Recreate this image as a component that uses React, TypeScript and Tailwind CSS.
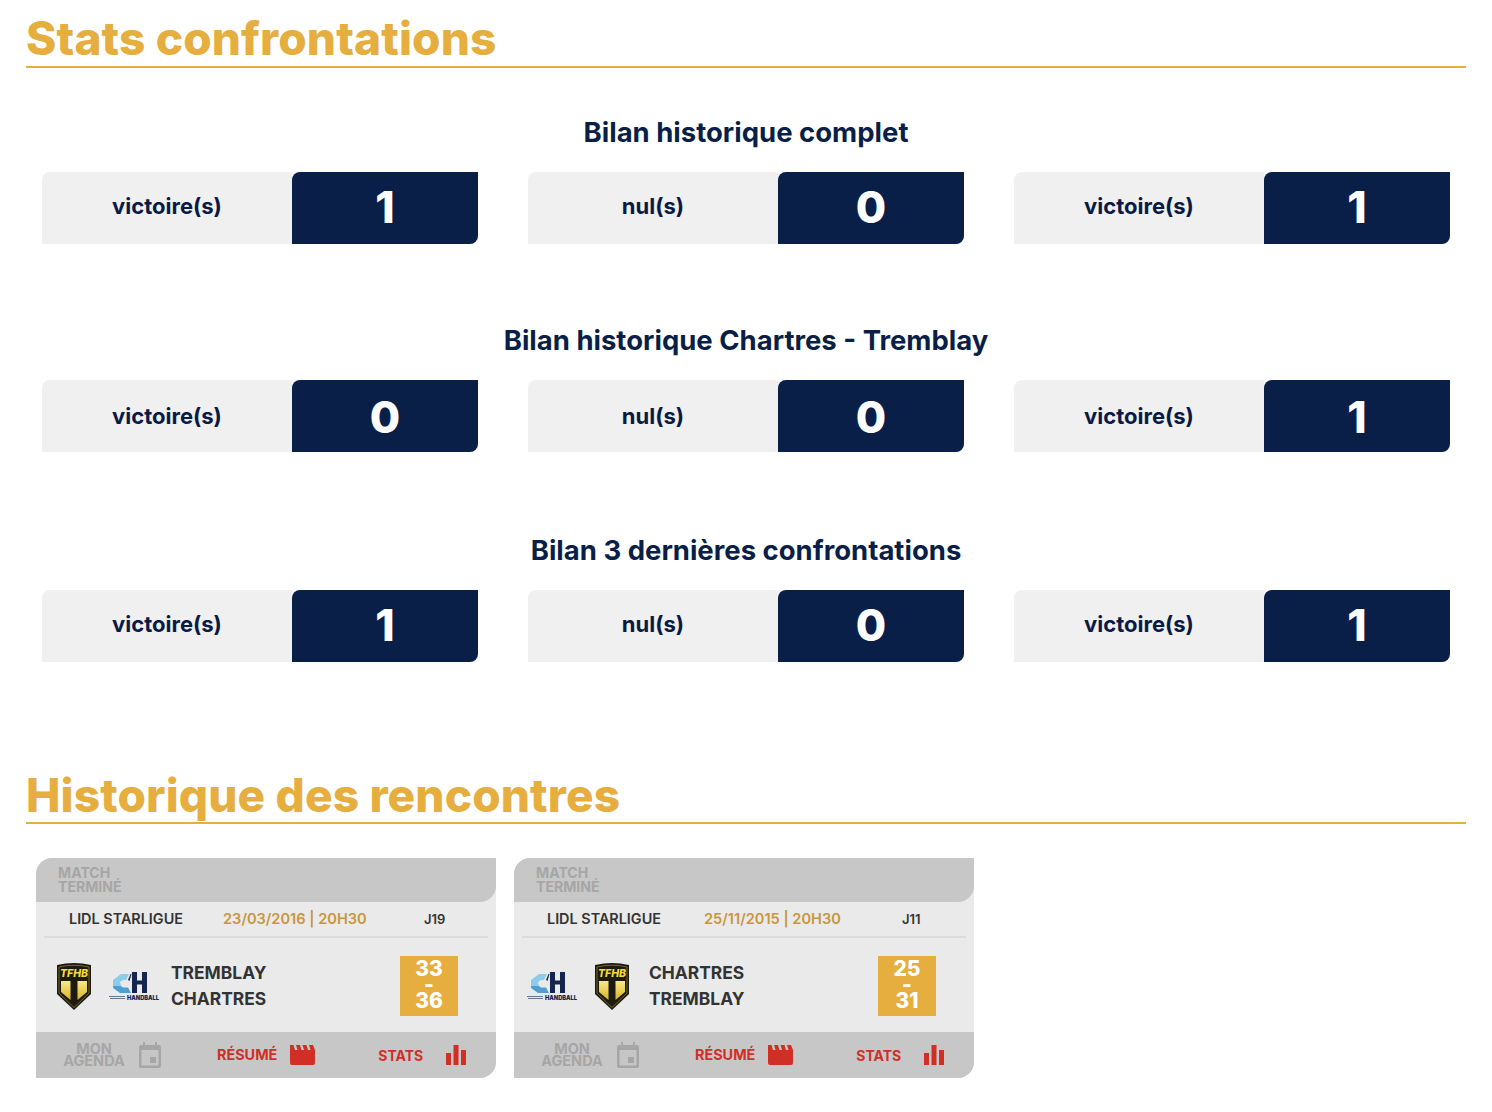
const font = "font-['Inter','Liberation_Sans',sans-serif]";

function SectionTitle({ text, cls }: { text: string; cls: string }) {
  return (
    <div className={`border-b-2 border-[#e6ae3e] ${cls}`}>
      <h2 className="text-[46px] leading-[56px] font-extrabold text-[#e6ae3e] tracking-[0.12px] whitespace-nowrap">{text}</h2>
    </div>
  );
}

function Stat({ label, value, labelShift, shift }: { label: string; value: number; labelShift: string; shift: string }) {
  return (
    <div className="flex h-[72px]">
      <div className={`w-[250px] bg-[#f0f0f0] rounded-tl-lg flex items-center justify-center text-[22px] font-bold text-[#0a1a46] ${labelShift}`}>
        {label}
      </div>
      <div className={`flex-1 bg-[#0a1f48] rounded-tl-lg rounded-br-lg flex items-center justify-center text-[44px] font-extrabold text-white ${shift}`}>
        {value}
      </div>
    </div>
  );
}

function Bilan({ title, a, b, c, cls, labelShift, shift }: { title: string; a: number; b: number; c: number; cls: string; labelShift: string; shift: string }) {
  return (
    <section className={cls}>
      <h3 className="text-center text-[27.5px] leading-[30px] font-bold text-[#0a1f48]">{title}</h3>
      <div className="grid grid-cols-3 gap-[50px] px-4 mt-[25px]">
        <Stat label="victoire(s)" value={a} labelShift={labelShift} shift={shift} />
        <Stat label="nul(s)" value={b} labelShift={labelShift} shift={shift} />
        <Stat label="victoire(s)" value={c} labelShift={labelShift} shift={shift} />
      </div>
    </section>
  );
}

function Tfhb() {
  return (
    <svg width="34" height="48" viewBox="0 0 34 48">
      <defs>
        <linearGradient id="tfhbPanel" x1="0" y1="0" x2="0" y2="1">
          <stop offset="0" stopColor="#f7e98a" />
          <stop offset="1" stopColor="#d9b426" />
        </linearGradient>
      </defs>
      <path d="M0 3 Q17 -1 34 3 V32 L17 48 L0 32 Z" fill="#1c1b12" />
      <path d="M2 5 Q17 1.500 32 5 V31 L17 45.500 L2 31 Z" fill="none" stroke="#8a7a2a" strokeWidth="0.8" />
      <path d="M4 19 H13.500 V38 L4 30 Z" fill="url(#tfhbPanel)" />
      <path d="M20.500 19 H30 V30 L20.500 38 Z" fill="url(#tfhbPanel)" />
      <text x="17" y="15" textAnchor="middle" fontSize="10.5" fontWeight="800" fontStyle="italic" fill="#f4d83c">TFHB</text>
    </svg>
  );
}

function Ch() {
  return (
    <div className="relative w-[50px] h-[28px]">
      <svg width="50" height="28" viewBox="0 0 50 28" className="absolute left-0 top-0">
        <path d="M4 8 L12 2 H20 L17 8 H14 L11 10 L12 14 L4 14 Z" fill="#8ccbea" />
        <path d="M4 14 H12 L14 15.500 H19 L22 21 H11 L4 16 Z" fill="#4f9fd2" />
        <path d="M19 8 L21.500 2 H22.500 L20.500 9 Z" fill="#14254f" />
        <path d="M23 0 H28 V8.500 H33 V0 H38 V21 H33 V12.500 H28 V21 H23 Z" fill="#14254f" />
        <rect x="0" y="24" width="16" height="1" fill="#6a7690" />
        <rect x="1" y="26" width="15" height="1" fill="#6a7690" />
      </svg>
      <span className="absolute right-0 top-[21.500px] text-[5.7px] leading-[7px] font-black text-[#14254f]">HANDBALL</span>
    </div>
  );
}

function Calendar() {
  return (
    <svg width="24" height="26" viewBox="0 0 24 26">
      <path d="M5 0h2v3h10V0h2v3h2a2 2 0 0 1 2 2v19a2 2 0 0 1-2 2H3a2 2 0 0 1-2-2V5a2 2 0 0 1 2-2h2Z" fill="#a6a6a6" />
      <rect x="3.500" y="8" width="17" height="15.500" fill="#c6c6c6" />
      <rect x="12" y="15" width="6" height="6" fill="#a6a6a6" />
    </svg>
  );
}

function Clapper() {
  return (
    <svg width="25" height="20" viewBox="0 0 25 20">
      <path d="M0 0h3.500l1.500 5h2.500L6 0h4l1.500 5H14L12.500 0h4L18 5h2.500L19 0h4l2 5V18a2 2 0 0 1-2 2H2a2 2 0 0 1-2-2Z" fill="#d12e26" />
    </svg>
  );
}

function Bars() {
  return (
    <svg width="20" height="20" viewBox="0 0 20 20">
      <rect x="0" y="8" width="5" height="12" fill="#d12e26" />
      <rect x="7.500" y="0" width="5" height="20" fill="#d12e26" />
      <rect x="15" y="5" width="5" height="15" fill="#d12e26" />
    </svg>
  );
}

function Card({ date, day, home, away, s1, s2, logos, dateX, logoPad }: { date: string; day: string; home: string; away: string; s1: number; s2: number; logos: React.ReactNode; dateX: string; logoPad: string }) {
  return (
    <div className="w-[460px] h-[220px] bg-[#eaeaea] flex flex-col rounded-tl-2xl rounded-br-2xl overflow-hidden">
      <div className="h-[44px] bg-[#c7c7c7] rounded-br-2xl pl-[22px] pt-[8px] text-[14.1px] leading-[14px] font-bold text-[#a6a6a6]">
        MATCH<br />TERMINÉ
      </div>
      <div className="h-[36px] mx-2 border-b-2 border-[#dcdcdc] flex items-center relative text-[#333]">
        <span className="ml-[25px] text-[14.4px] font-semibold">LIDL STARLIGUE</span>
        <span className={`absolute top-[7px] text-[14.6px] font-semibold text-[#c8963a] ${dateX}`}>{date}</span>
        <span className="absolute left-[380px] top-[8px] text-[13px] font-semibold">{day}</span>
      </div>
      <div className="flex-1 flex items-center relative">
        <div className={`w-[135px] mt-[2px] flex items-center gap-[18px] shrink-0 ${logoPad}`}>{logos}</div>
        <div className="text-[17.4px] leading-[26px] font-bold text-[#333] pt-[2px]">
          <div>{home}</div>
          <div>{away}</div>
        </div>
        <div className="absolute left-[364px] top-[18px] w-[58px] h-[60px] bg-[#e6ae3e] text-white text-center text-[21px] leading-[16px] font-extrabold pt-[5px]">
          <div>{s1}</div>
          <div>-</div>
          <div>{s2}</div>
        </div>
      </div>
      <div className="h-[46px] bg-[#c7c7c7] flex items-center relative font-bold">
        <div className="ml-[27px] w-[62px] text-center text-[14.5px] leading-[12px] text-[#a6a6a6]">MON<br />AGENDA</div>
        <div className="ml-[13px]"><Calendar /></div>
        <div className="ml-[55px] text-[14.4px] text-[#d12e26]">RÉSUMÉ</div>
        <div className="ml-[13px]"><Clapper /></div>
        <div className="ml-[63px] text-[14px] text-[#d12e26]">STATS</div>
        <div className="ml-[23px]"><Bars /></div>
      </div>
    </div>
  );
}

export default function App() {
  return (
    <div className={`w-[1492px] h-[1112px] bg-white overflow-hidden pl-[26px] pr-[26px] pt-[10px] ${font}`}>
      <SectionTitle text="Stats confrontations" cls="h-[58px]" />
      <Bilan title="Bilan historique complet" a={1} b={0} c={1} cls="mt-[49px]" labelShift="pb-[4px]" shift="pb-[2px]" />
      <Bilan title="Bilan historique Chartres - Tremblay" a={0} b={0} c={1} cls="mt-[81px]" labelShift="" shift="pt-[2px]" />
      <Bilan title="Bilan 3 dernières confrontations" a={1} b={0} c={1} cls="mt-[83px]" labelShift="pb-[4px]" shift="pb-[2px]" />
      <SectionTitle text="Historique des rencontres" cls="h-[57px] mt-[105px]" />
      <div className="flex gap-[18px] ml-[10px] mt-[34px]">
        <Card date="23/03/2016 | 20H30" day="J19" home="TREMBLAY" away="CHARTRES" s1={33} s2={36} dateX="left-[179px]" logoPad="pl-[21px]"
          logos={<><Tfhb /><Ch /></>} />
        <Card date="25/11/2015 | 20H30" day="J11" home="CHARTRES" away="TREMBLAY" s1={25} s2={31} dateX="left-[182px]" logoPad="pl-[13px]"
          logos={<><Ch /><Tfhb /></>} />
      </div>
    </div>
  );
}
